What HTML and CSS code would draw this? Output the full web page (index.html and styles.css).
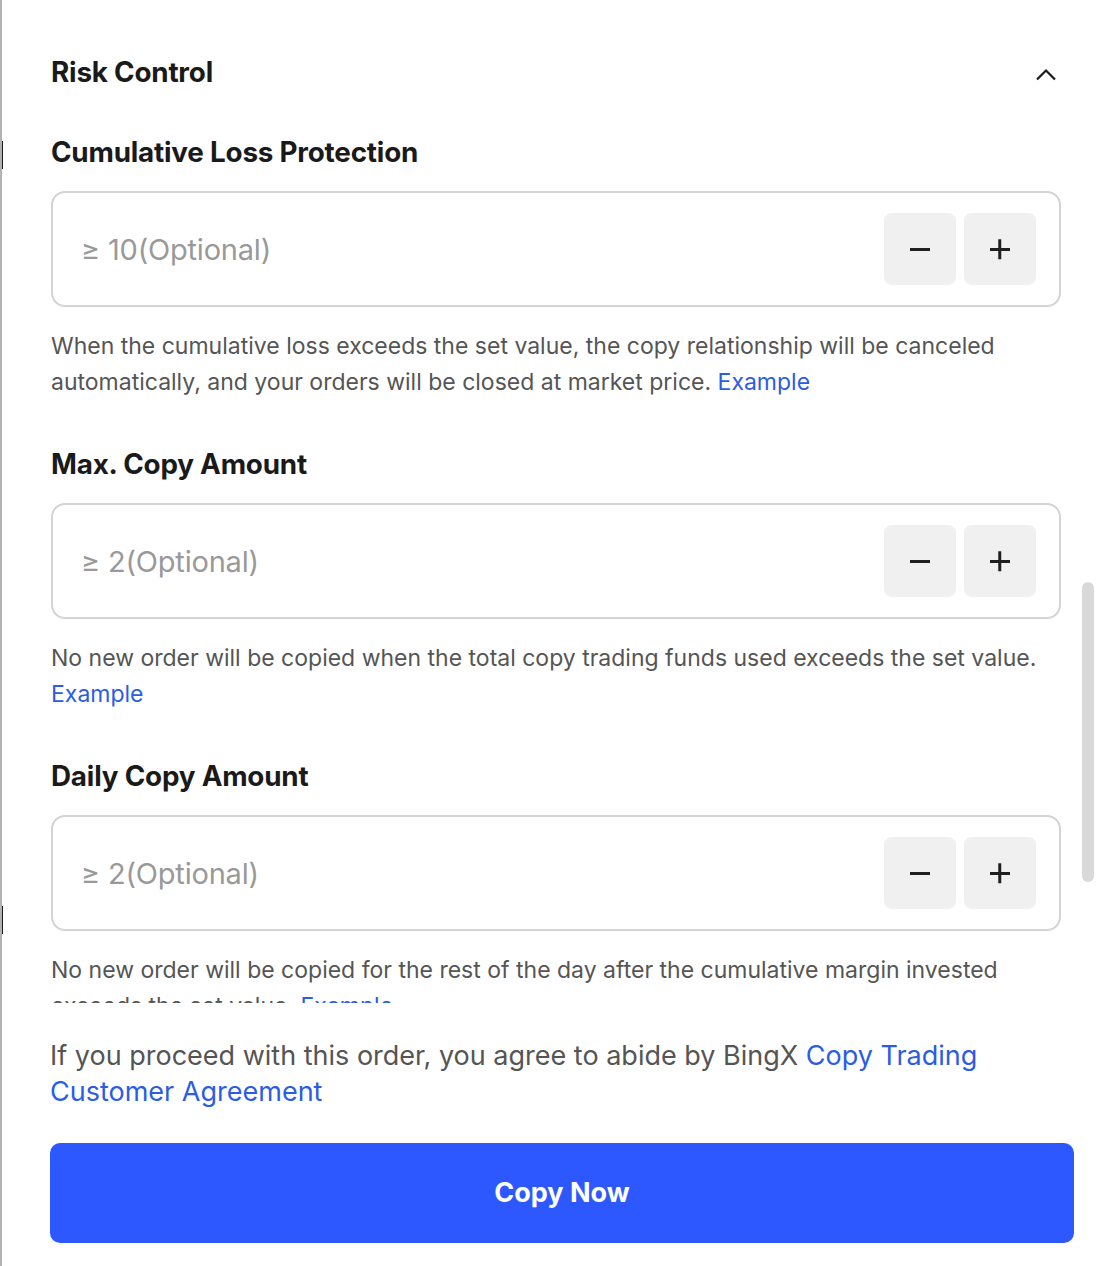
FILE: index.html
```html
<!DOCTYPE html>
<html>
<head lang="en">
    <meta charset="UTF-8">
    <title>Risk Control</title>
    <link rel="stylesheet" href="styles.css">
</head>
<body>
<div id="edge">
    <span class="mark dark" style="top: 141px;"></span>
    <span class="mark blue" style="top: 763px;"></span>
    <span class="mark dark" style="top: 906px;"></span>
</div>
<div id="panel">
    <div id="scroll">
        <div class="head">
            <h2>Risk Control</h2>
            <svg class="chevron" width="22" height="14" viewBox="0 0 22 14">
                <path d="M2 11.5 L11 2.5 L20 11.5" fill="none" stroke="#1a1a1a" stroke-width="2.2"/>
            </svg>
        </div>

        <div class="field">
            <h3>Cumulative Loss Protection</h3>
            <div class="box">
                <span class="holder">&ge; 10(Optional)</span>
                <a href="javascript:;" class="step minus"></a>
                <a href="javascript:;" class="step plus"></a>
            </div>
            <p class="tip">When the cumulative loss exceeds the set value, the copy relationship will be canceled automatically, and your orders will be closed at market price. <a href="javascript:;">Example</a></p>
        </div>

        <div class="field">
            <h3>Max. Copy Amount</h3>
            <div class="box">
                <span class="holder">&ge; 2(Optional)</span>
                <a href="javascript:;" class="step minus"></a>
                <a href="javascript:;" class="step plus"></a>
            </div>
            <p class="tip">No new order will be copied when the total copy trading funds used exceeds the set value. <a href="javascript:;">Example</a></p>
        </div>

        <div class="field">
            <h3>Daily Copy Amount</h3>
            <div class="box">
                <span class="holder">&ge; 2(Optional)</span>
                <a href="javascript:;" class="step minus"></a>
                <a href="javascript:;" class="step plus"></a>
            </div>
            <p class="tip">No new order will be copied for the rest of the day after the cumulative margin invested exceeds the set value. <a href="javascript:;">Example</a></p>
        </div>

        <div class="thumb"></div>
    </div>

    <div id="foot">
        <p class="agree">If you proceed with this order, you agree to abide by BingX <a href="javascript:;">Copy Trading Customer Agreement</a></p>
        <a href="javascript:;" class="copy">Copy Now</a>
    </div>
</div>
</body>
</html>
```

FILE: styles.css
```css
*{ margin: 0; padding: 0; text-decoration: none; box-sizing: border-box;}
body { background: #fff; font-family: Inter, "Noto Sans", Arial, sans-serif; color: #1a1a1a;
    border-left: 2px solid #b3b3b3; min-height: 1266px; position: relative;}
a { color: #2b5ce6;}

#edge { position: absolute; left: -2px; top: 0; width: 3px; height: 100%;}
#edge .mark { position: absolute; left: 0; width: 3px; height: 28px;}
#edge .dark { background: #1b1b1b;}
#edge .blue { background: #7d8fd6; height: 21px; width: 2px;}

#panel { width: 1118px;}
#scroll { height: 1003px; overflow: hidden; position: relative; padding: 54px 0 0 49px;}
.thumb { position: absolute; left: 1080px; top: 582px; width: 12px; height: 300px;
    border-radius: 6px; background: #d9d9d9;}

.head { display: flex; align-items: center; justify-content: space-between; width: 1009px; height: 36px;}
.head h2 { font-size: 27.8px; font-weight: 700; line-height: 36px; letter-spacing: -0.2px;}
.chevron { margin: 5px 3px 0 0;}

.field { width: 1010px; margin-top: 44px;}
.field + .field { margin-top: 46px;}
.field h3 { font-size: 27.8px; font-weight: 700; line-height: 36px; letter-spacing: -0.2px;}
.box { display: flex; align-items: center; gap: 8px; height: 116px; margin-top: 21px;
    border: 2px solid #d4d4d4; border-radius: 14px; padding: 0 23px 0 28px;}
.holder { flex: 1; font-size: 29px; color: #999; letter-spacing: -0.2px;}
.step { position: relative; width: 72px; height: 72px; background: #f0f0f0; border-radius: 8px;}
.step::before, .step::after { content: ""; position: absolute; left: 26px; top: 35px; width: 20px; height: 2.5px; background: #1f1f1f;}
.minus::after { display: none;}
.plus::after { transform: rotate(90deg);}

.tip { margin-top: 21px; font-size: 23px; line-height: 36px; color: #555;}

#foot { padding: 35px 0 0 48px;}
.agree { width: 1000px; font-size: 27px; line-height: 36px; color: #555;}
.copy { display: block; width: 1024px; height: 100px; margin-top: 33px; border-radius: 10px;
    background: #2d58ff; color: #fff; font-size: 27px; font-weight: 700; line-height: 100px; text-align: center;}
```
